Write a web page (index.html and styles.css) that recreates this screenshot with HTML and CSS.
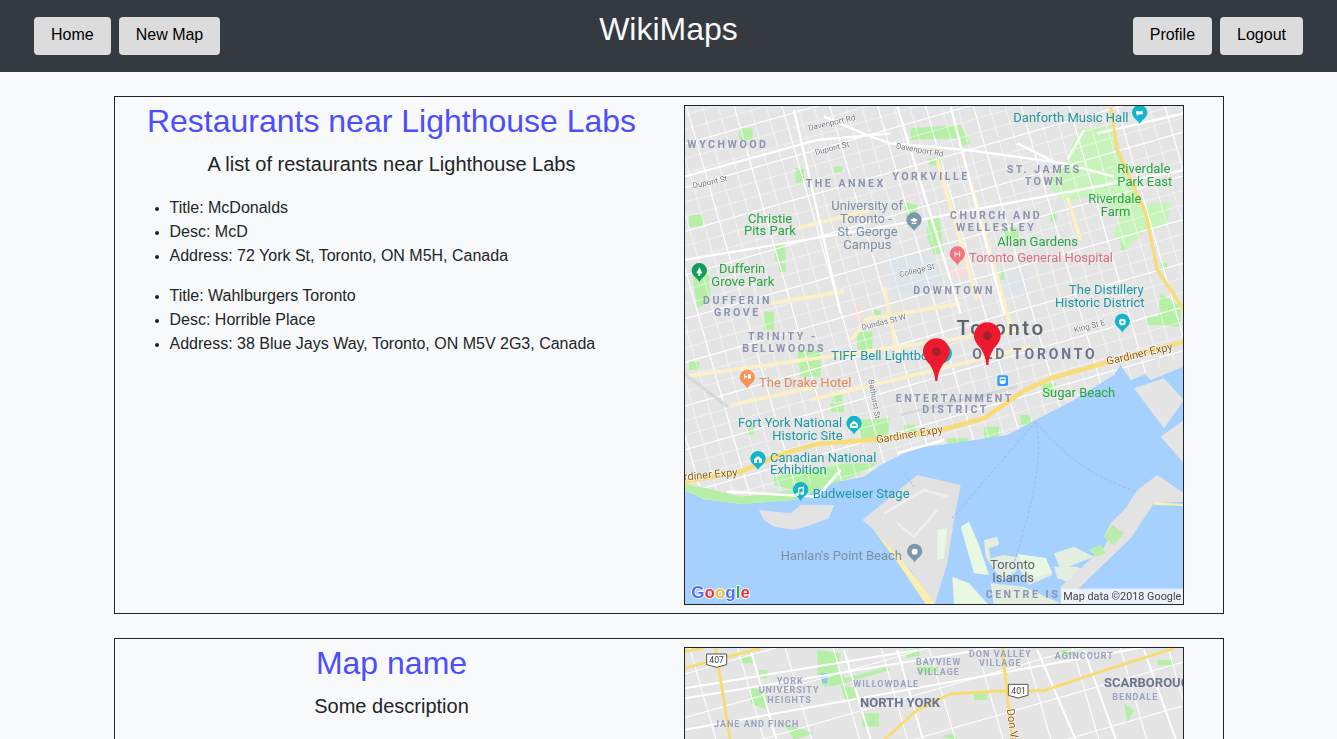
FILE: index.html
```html
<!DOCTYPE html>
<html lang="en">
<head>
<meta charset="utf-8">
<title>WikiMaps</title>
<link rel="stylesheet" href="styles.css">
</head>
<body>
<header class="topbar">
  <nav class="btn-group">
    <a class="btn" href="#">Home</a>
    <a class="btn" href="#">New Map</a>
  </nav>
  <h1 class="brand">WikiMaps</h1>
  <nav class="btn-group btn-group-right">
    <a class="btn" href="#">Profile</a>
    <a class="btn" href="#">Logout</a>
  </nav>
</header>
<main class="maps">
  <section class="card">
    <div class="info">
      <h2 class="map-title">Restaurants near Lighthouse Labs</h2>
      <p class="map-desc">A list of restaurants near Lighthouse Labs</p>
      <ul class="place">
        <li>Title: McDonalds</li>
        <li>Desc: McD</li>
        <li>Address: 72 York St, Toronto, ON M5H, Canada</li>
      </ul>
      <ul class="place">
        <li>Title: Wahlburgers Toronto</li>
        <li>Desc: Horrible Place</li>
        <li>Address: 38 Blue Jays Way, Toronto, ON M5V 2G3, Canada</li>
      </ul>
    </div>
    <div class="map-col">
      <svg class="map" viewBox="3 18 1494 1494" xmlns="http://www.w3.org/2000/svg">
        <defs>
          <pattern id="streets" width="46" height="42" patternUnits="userSpaceOnUse" patternTransform="rotate(-16)">
            <path d="M0 0H46M0 0V42" stroke="#fff" stroke-width="3.5" fill="none" opacity=".85"/>
          </pattern>
          <pattern id="streets2" width="138" height="126" patternUnits="userSpaceOnUse" patternTransform="rotate(-16)">
            <path d="M0 0H138M0 0V126" stroke="#fff" stroke-width="6" fill="none"/>
          </pattern>
          <path id="drop" d="M0 28C-5 15-23 9-23-6A23 23 0 1 1 23-6C23 9 5 15 0 28Z"/>
          <path id="redpin" d="M-3 88C-4 70-9 55-20 38C-32 24-40 14-40 0A40 40 0 1 1 40 0C40 14 32 24 20 38C9 55 4 70 3 88Z"/>
        </defs>
        <rect x="0" y="0" width="1500" height="1520" fill="#e5e5e5"/>

        <g fill="#b5f0a6">
          <path d="M165 85h40v35h-40zM680 85l150-10 30 55-30 10-10-25-140 5zM735 175h40v20h-40zM450 200h25v18h-25z"/>
          <path d="M335 205h25v45h-25zM15 345h42v35H15zM272 432h32v50h-32zM660 305l40 10 0 50-30 10z"/>
          <path d="M730 350l35-5 15 110-30 10-20-55zM960 380l40 5 5 30-40 5zM1100 335h18v30h-18z"/>
          <path d="M520 695h45v55h-45zM240 635h30v55h-30zM25 525h50l5 80-40 20zM285 490h20v25h-20z"/>
          <path d="M950 510h30v30h-30zM1310 420h20v30h-20zM1430 490h20v20h-20zM570 630h20v15h-20zM1390 650h35v25h-35z"/>
        </g>
        <path d="M1180 90l100-15 30 110 30 70 30 60 90-10-10 70-70 20-50 50-40-40 20-60-80-60-90 20-50-50 60-80z" fill="#c9f3bc"/>
        <path d="M1430 580l60 40v60l-70-5z" fill="#b5f0a6"/>
        <path d="M620 470l110-10 50 60-30 60-130 0z" fill="#dfe4ea"/>
        <path d="M960 510h70v70h-70z" fill="#dfe4ea"/>
        <path d="M505 620h35v40h-35z" fill="#f6dede"/>
        <path d="M780 500h60l10 30h-50z" fill="#f6dede"/>

        <g transform="translate(0 750)" fill="#b5f0a6">
          <path d="M270 380L470 340 580 340 530 370 470 395 330 420 270 405Z"/>
          <path d="M520 210L620 205 610 262 530 268Z"/>
          <path d="M15 35h30v25H15zM340 0h70v80h-60zM445 130h30v25h-30zM440 160h40v25h-40zM190 230h20v25h-20zM660 225h35v30h-35z"/>
          <path d="M790 265h60v20h-60zM900 230h45v40h-45zM1010 195h30v30h-30zM620 340l65-20-50 60z"/>
          <path d="M1075 100h40v30h-40z"/>
        </g>

        <rect x="0" y="0" width="1500" height="1520" fill="url(#streets)"/>
        <rect x="0" y="0" width="1500" height="1520" fill="url(#streets2)"/>

        <g fill="none" stroke="#fcf0c8" stroke-width="11">
          <path d="M340 385L560 330M260 610L480 575M540 660L830 610M760 180L880 600M860 250L980 680M600 560L640 760M1150 290L1190 420M560 650L500 720"/>
          <path d="M0 830L1000 690M380 900L1040 740M140 915L400 860"/>
        </g>
        <g fill="none" stroke="#fff" stroke-width="7">
          <path d="M420 50L560 110 620 130 850 150 1140 190 1290 230M0 230L400 120 620 100M800 20L960 640M640 20L830 640M0 480L600 380 1500 210M330 30L470 640M1000 130L1120 190M1200 90L1150 180M1500 40L1240 100"/>
        </g>
        <path d="M1280 20L1300 150 1385 340 1420 510 1500 630" fill="none" stroke="#f8dc7a" stroke-width="10"/>

        <g transform="translate(0 750)">
          <path d="M0 420L60 448 170 462 330 450 460 395 540 380 590 345 660 310 700 292 770 285 970 255 1050 212 1170 150 1290 75 1310 45 1340 90 1420 60 1500 40V790H0Z" fill="#a6d0fe"/>
          <path d="M1350 115L1440 85 1500 150 1440 235ZM1430 260L1500 210V340ZM1380 70L1500 20V50L1400 90Z" fill="#e5e5e5"/>
          <path d="M0 420L60 448 170 462 330 450 460 395 440 375 330 420 170 440 90 420 0 400Z" fill="#b5f0a6"/>
          <path d="M225 480L320 490 350 465 450 465 435 505 380 525 330 540 270 530 240 510Z" fill="#e3e3e3"/>
          <path d="M535 510L700 375 830 405 810 510 790 640 750 770 680 660 570 540Z" fill="#e2e2e2"/>
          <path d="M600 490L720 420 790 440M640 520L690 560 760 480" fill="none" stroke="#eeeeee" stroke-width="8"/>
          <path d="M565 535L650 625 760 770H730L650 650Z" fill="#fbeeb0"/>
          <path d="M760 540l30-5-10 90-20 5zM830 530l25-15 30 70 30 90-45-5zM805 680l50 20 60 65H810z" fill="#e8f8e2"/>
          <path d="M900 570l40-10 5 25-30 10 5 30 40-10 60 10-25 40-40 25-30-40-20-30zM1000 615l85 10 20 50-70 30-30-50zM1110 610l60-20 60 30-100 40zM1110 650l70 0 30 20-60 25-30-10zM920 700l100 10 110 50-200 10z" fill="#e3ede0"/>
          <path d="M1000 612l85 12 20 45-60 15z" fill="#e8f8e2"/>
          <path d="M1360 420L1420 375 1500 430V455L1410 460 1340 565 1200 700 1130 770 1130 710 1260 590 1340 450ZM1280 520L1355 445 1335 530 1290 585 1260 560ZM1215 600l35-15 15 25-25 10z" fill="#e3e3e3"/>
          <path d="M1260 560l25-35 35 25-30 35zM1215 600l35-15 15 25-25 10z" fill="#b8edaa"/>
          <path d="M1410 457l90 5v6l-90-4z" fill="#fbeeb0"/>
          <path d="M1055 215L800 510M1055 215Q1090 330 990 640M1055 215Q1180 370 1360 425M660 370L690 410" fill="none" stroke="#8fbcf5" stroke-width="3" stroke-dasharray="9 6"/>
          <path d="M0 395L170 365 300 310 400 282 580 268 780 238 900 205 1020 122 1100 85 1260 40 1500 -25" fill="none" stroke="#f8dc7a" stroke-width="14"/>
          <path d="M640 310L780 270M470 360L400 440 130 425" fill="none" stroke="#fff" stroke-width="8"/>
          <path d="M0 70L130 170M650 195L1000 110" fill="none" stroke="#d4d4d4" stroke-width="10" opacity=".8"/>

          <text class="m poi-orange" x="225" y="110">The Drake Hotel</text>
          <text class="m street" transform="translate(553 90) rotate(80)">Bathurst St</text>
          <text class="m hood" x="635" y="155">ENTERTAINMENT</text>
          <text class="m hood" x="715" y="190">DISTRICT</text>
          <text class="m park" x="1075" y="142">Sugar Beach</text>
          <text class="m poi-teal" x="162" y="230">Fort York National</text>
          <text class="m poi-teal" x="265" y="270">Historic Site</text>
          <text class="m road" transform="translate(578 280) rotate(-9)">Gardiner Expy</text>
          <text class="m road" transform="translate(1270 45) rotate(-13)">Gardiner Expy</text>
          <text class="m road" transform="translate(-40 395) rotate(-5)">Gardiner Expy</text>
          <text class="m poi-teal" x="258" y="335">Canadian National</text>
          <text class="m poi-teal" x="258" y="373">Exhibition</text>
          <text class="m poi-teal" x="386" y="445">Budweiser Stage</text>
          <text class="m poi-gray" x="290" y="630">Hanlan's Point Beach</text>
          <text class="m dark" x="918" y="658">Toronto</text>
          <text class="m dark" x="925" y="697">Islands</text>
          <text class="m hood" x="905" y="743">CENTRE IS</text>

          <g transform="translate(190 88)"><use href="#drop" fill="#f7945a"/><path d="M-8-16v14M8-16v14M-8-8h8M4-16v14" stroke="#fff" stroke-width="4" fill="none"/></g>
          <g transform="translate(510 226)"><use href="#drop" fill="#12b5cb"/><path d="M-12-4L0-14 12-4V8H-12Z" fill="#fff"/><rect x="-6" y="-3" width="12" height="5" fill="#12b5cb"/></g>
          <g transform="translate(222 332)"><use href="#drop" fill="#12b5cb"/><path d="M-12 6V-4L0-14 12-4V6Z" fill="#fff"/><rect x="-3" y="-3" width="6" height="9" fill="#12b5cb"/></g>
          <g transform="translate(350 425)"><use href="#drop" fill="#12b5cb"/><path d="M-6 8V-10L8-13V4" stroke="#fff" stroke-width="4" fill="none"/><circle cx="-10" cy="8" r="5" fill="#fff"/><circle cx="4" cy="5" r="5" fill="#fff"/></g>
          <g transform="translate(692 610)"><use href="#drop" fill="#7b98ad"/><circle r="9" cy="-5" fill="#fff"/></g>
          <rect x="940" y="76" width="32" height="32" rx="5" fill="#2f9bfb"/>
          <path d="M947 82h18v15l-3 5h-12l-3-5z" fill="#fff"/>
          <rect x="950" y="86" width="12" height="5" fill="#2f9bfb"/>
          <text class="google" x="22" y="745"><tspan class="g-blue">G</tspan><tspan class="g-red">o</tspan><tspan class="g-yellow">o</tspan><tspan class="g-blue">g</tspan><tspan class="g-green">l</tspan><tspan class="g-red">e</tspan></text>
          <rect x="1132" y="716" width="368" height="50" fill="#f5f7fa" opacity=".85"/>
          <text class="m attrib" x="1138" y="750">Map data ©2018 Google</text>
        </g>

        <text class="m poi-teal" x="988" y="66">Danforth Music Hall</text>
        <text class="m street" transform="translate(375 92) rotate(-13)">Davenport Rd</text>
        <text class="m street" transform="translate(395 165) rotate(-14)">Dupont St</text>
        <text class="m street" transform="translate(635 145) rotate(10)">Davenport Rd</text>
        <text class="m street" transform="translate(28 265) rotate(-12)">Dupont St</text>
        <text class="m hood" x="10" y="143">WYCHWOOD</text>
        <text class="m hood" x="365" y="260">THE ANNEX</text>
        <text class="m hood" x="625" y="239">YORKVILLE</text>
        <text class="m hood" x="968" y="219">ST. JAMES</text>
        <text class="m hood" x="1022" y="254">TOWN</text>
        <text class="m park" x="1300" y="220">Riverdale</text>
        <text class="m park" x="1300" y="258">Park East</text>
        <text class="m park" x="1213" y="308">Riverdale</text>
        <text class="m park" x="1250" y="347">Farm</text>
        <text class="m poi-gray" x="442" y="330">University of</text>
        <text class="m poi-gray" x="468" y="368">Toronto -</text>
        <text class="m poi-gray" x="460" y="407">St. George</text>
        <text class="m poi-gray" x="478" y="446">Campus</text>
        <text class="m hood" x="798" y="356">CHURCH AND</text>
        <text class="m hood" x="816" y="392">WELLESLEY</text>
        <text class="m park" x="192" y="368">Christie</text>
        <text class="m park" x="180" y="406">Pits Park</text>
        <text class="m park" x="940" y="437">Allan Gardens</text>
        <text class="m poi-red" x="855" y="487">Toronto General Hospital</text>
        <text class="m street" transform="translate(648 532) rotate(-14)">College St</text>
        <text class="m park" x="105" y="520">Dufferin</text>
        <text class="m park" x="82" y="559">Grove Park</text>
        <text class="m hood" x="688" y="583">DOWNTOWN</text>
        <text class="m hood" x="57" y="613">DUFFERIN</text>
        <text class="m hood" x="90" y="648">GROVE</text>
        <text class="m poi-teal" x="1155" y="583">The Distillery</text>
        <text class="m poi-teal" x="1113" y="622">Historic District</text>
        <text class="m street" transform="translate(535 690) rotate(-14)">Dundas St W</text>
        <text class="m street" transform="translate(1172 698) rotate(-14)">King St E</text>
        <text class="m city" x="818" y="705">Toronto</text>
        <text class="m hood" x="192" y="720">TRINITY -</text>
        <text class="m hood" x="175" y="756">BELLWOODS</text>
        <text class="m poi-teal" x="442" y="779">TIFF Bell Lightbox</text>
        <text class="m district" x="865" y="776">OLD TORONTO</text>

        <g transform="translate(690 366)"><use href="#drop" fill="#7b98ad"/><path d="M-12-6L0-12 12-6 0 0Z" fill="#fff"/><path d="M-7 0V6H7V0L0 3Z" fill="#fff"/></g>
        <g transform="translate(1367 44)"><use href="#drop" fill="#12b5cb"/><path d="M-11-10H10V-1H-2L-8 4V-1H-11Z" fill="#fff"/></g>
        <g transform="translate(820 468)"><use href="#drop" fill="#f4747f"/><path d="M-7-14V2M7-14V2M-7-6H7" stroke="#fff" stroke-width="3" fill="none"/></g>
        <g transform="translate(46 518)"><use href="#drop" fill="#0f9d58"/><path d="M0-16L9 2H3V10H-3V2H-9Z" fill="#fff"/></g>
        <g transform="translate(1315 670)"><use href="#drop" fill="#12b5cb"/><circle cy="-4" r="10" fill="#fff"/><circle cy="-4" r="4" fill="#12b5cb"/></g>
        <circle cx="776" cy="760" r="28" fill="#12b5cb"/>

        <g transform="translate(910 707)"><use href="#redpin" fill="#ec1a2c"/><circle r="13" fill="#a8202c"/></g>
        <g transform="translate(757 755)"><use href="#redpin" fill="#ec1a2c"/><circle r="13" fill="#a8202c"/></g>
      </svg>
    </div>
  </section>

  <section class="card">
    <div class="info">
      <h2 class="map-title">Map name</h2>
      <p class="map-desc">Some description</p>
    </div>
    <div class="map-col">
      <svg class="map" viewBox="3 54 1494 1494" xmlns="http://www.w3.org/2000/svg">
        <rect x="0" y="0" width="1500" height="1560" fill="#e5e5e5"/>
        <g fill="#b5f0a6">
          <path d="M400 60l70 10-10 50 30 30-70 20-20-40zM170 80h40v20h-40zM225 120h25v25h-25zM660 60l40-5 10 20-40 10zM700 110h60v20h-60zM470 165l40 10 10 40-40-10zM200 170l50 20 0 50-50-20zM300 280l90 30-60 20zM535 250h50v40h-50zM1320 220l30 20-20 40zM1420 90h50v15h-50zM770 320l40-10 10 20zM870 190h40v20h-40zM1130 60h40v15h-40z"/>
          <path d="M430 160L610 110 620 120 440 170Z"/>
        </g>
        <path d="M410 130h20v30h-15z" fill="#8fc4f5"/>
        <rect x="0" y="0" width="1500" height="1560" fill="url(#streets2)"/>
        <g fill="none" stroke="#fff" stroke-width="6">
          <path d="M0 205L1500-40M0 300L1500 30M0 175L700 60M480 60L560 330M640 60L720 340M1060 60L1180 340M1200 60L1300 340M1380 60L1480 340M200 60L280 340"/>
        </g>
        <path d="M0 115L230 55M95 54L140 340M600 330L700 240 800 192 960 182 1080 182 1250 125 1470 55M955 54L985 340" fill="none" stroke="#f8dc74" stroke-width="9"/>
        <path d="M0 65L60 54" fill="none" stroke="#f8dc74" stroke-width="9"/>
        <g class="shield"><path d="M68 72H128V104L98 112 68 104Z"/><text class="shield-text" x="76" y="100">407</text></g>
        <g class="shield"><path d="M973 163H1032V196L1002 204 973 196Z"/><text class="shield-text" x="982" y="192">401</text></g>
        <text class="m hood2" x="855" y="80">DON VALLEY</text>
        <text class="m hood2" x="885" y="108">VILLAGE</text>
        <text class="m hood2" x="1112" y="86">AGINCOURT</text>
        <text class="m hood2" x="696" y="104">BAYVIEW</text>
        <text class="m hood2" x="700" y="134">VILLAGE</text>
        <text class="m hood2" x="508" y="170">WILLOWDALE</text>
        <text class="m hood2" x="278" y="162">YORK</text>
        <text class="m hood2" x="224" y="189">UNIVERSITY</text>
        <text class="m hood2" x="250" y="218">HEIGHTS</text>
        <text class="m hood2" x="90" y="290">JANE AND FINCH</text>
        <text class="m hood2" x="1285" y="210">BENDALE</text>
        <text class="m major" x="528" y="232">NORTH YORK</text>
        <text class="m major" x="1260" y="172">SCARBOROUGH</text>
        <text class="m road" transform="translate(968 238) rotate(82)">Don Valley</text>
      </svg>
    </div>
  </section>
</main>
</body>
</html>
```

FILE: styles.css
```css
* { box-sizing: border-box; }

body {
  margin: 0;
  background: #f8f9fa;
  color: #212529;
  font-family: "Liberation Sans", Arial, sans-serif;
  font-size: 16px;
  line-height: 1.5;
}

.topbar {
  display: grid;
  grid-template-columns: 1fr auto 1fr;
  height: 72px;
  padding: 0 34px;
  background: #343a40;
}

.btn-group {
  display: flex;
  gap: 8px;
  align-items: flex-start;
  padding-top: 17px;
}

.btn-group-right { justify-content: flex-end; }

.btn {
  display: block;
  height: 38px;
  padding: 6px 17px;
  border-radius: 4px;
  background: #dcdcdc;
  color: #000;
  text-decoration: none;
}

.brand {
  margin: 10px 0 0;
  color: #f8f9fa;
  font-size: 32px;
  font-weight: 400;
  line-height: 38.4px;
}

.maps {
  display: flex;
  flex-direction: column;
  gap: 24px;
  width: 1110px;
  margin: 24px auto 0;
}

.card {
  display: flex;
  height: 518px;
  border: 1px solid #212529;
}

.info {
  flex: 0 0 554px;
  padding: 5px 15px 0;
}

.map-title {
  margin: 0 0 9px;
  color: #4d4dff;
  font-size: 32px;
  font-weight: 400;
  line-height: 38.4px;
  text-align: center;
}

.map-desc {
  margin: 0 0 17px;
  font-size: 20px;
  line-height: 30px;
  text-align: center;
}

.place {
  margin: 0 0 16px;
  padding-left: 40px;
}

.place li::marker {
  font-size: 14px;
}

.map-col {
  padding: 8px 0 0 15px;
}

.map {
  display: block;
  width: 500px;
  height: 500px;
  border: 1px solid #212529;
  filter: blur(0.35px);
}

/* map labels */
.m { font-family: Roboto, "Liberation Sans", sans-serif; font-size: 39px; }
.hood { fill: #8c94b0; font-size: 32px; font-weight: 700; letter-spacing: 7.5px; }
.hood2 { fill: #9aa3c0; font-size: 27px; font-weight: 700; letter-spacing: 3px; }
.major { fill: #6b7590; font-size: 39px; font-weight: 700; }
.park { fill: #2aa644; }
.poi-teal { fill: #1f97a3; }
.poi-gray { fill: #7f8fa3; }
.poi-orange { fill: #e28a60; }
.poi-red { fill: #d9737e; }
.dark { fill: #5f6670; }
.street { fill: #6f7680; font-size: 24px; stroke: #fff; stroke-width: 3px; paint-order: stroke; }
.road { fill: #8a5a1e; font-size: 33px; stroke: #fff; stroke-width: 3px; paint-order: stroke; }
.city { fill: #5b6470; font-size: 62px; font-weight: 500; letter-spacing: 7.5px; }
.district { fill: #6b7590; font-size: 42px; font-weight: 700; letter-spacing: 8.5px; }
.attrib { fill: #444; font-size: 32.5px; }
.google { font-family: "Liberation Sans", sans-serif; font-size: 51px; font-weight: 700; stroke: #fff; stroke-width: 5px; paint-order: stroke; }
.g-blue { fill: #4f6ff0; }
.g-red { fill: #e8333a; }
.g-yellow { fill: #f0b92a; }
.g-green { fill: #34a853; }
.shield path { fill: #fff; stroke: #555; stroke-width: 3px; }
.shield-text { fill: #444; font-family: Roboto, "Liberation Sans", sans-serif; font-size: 26px; }
```
